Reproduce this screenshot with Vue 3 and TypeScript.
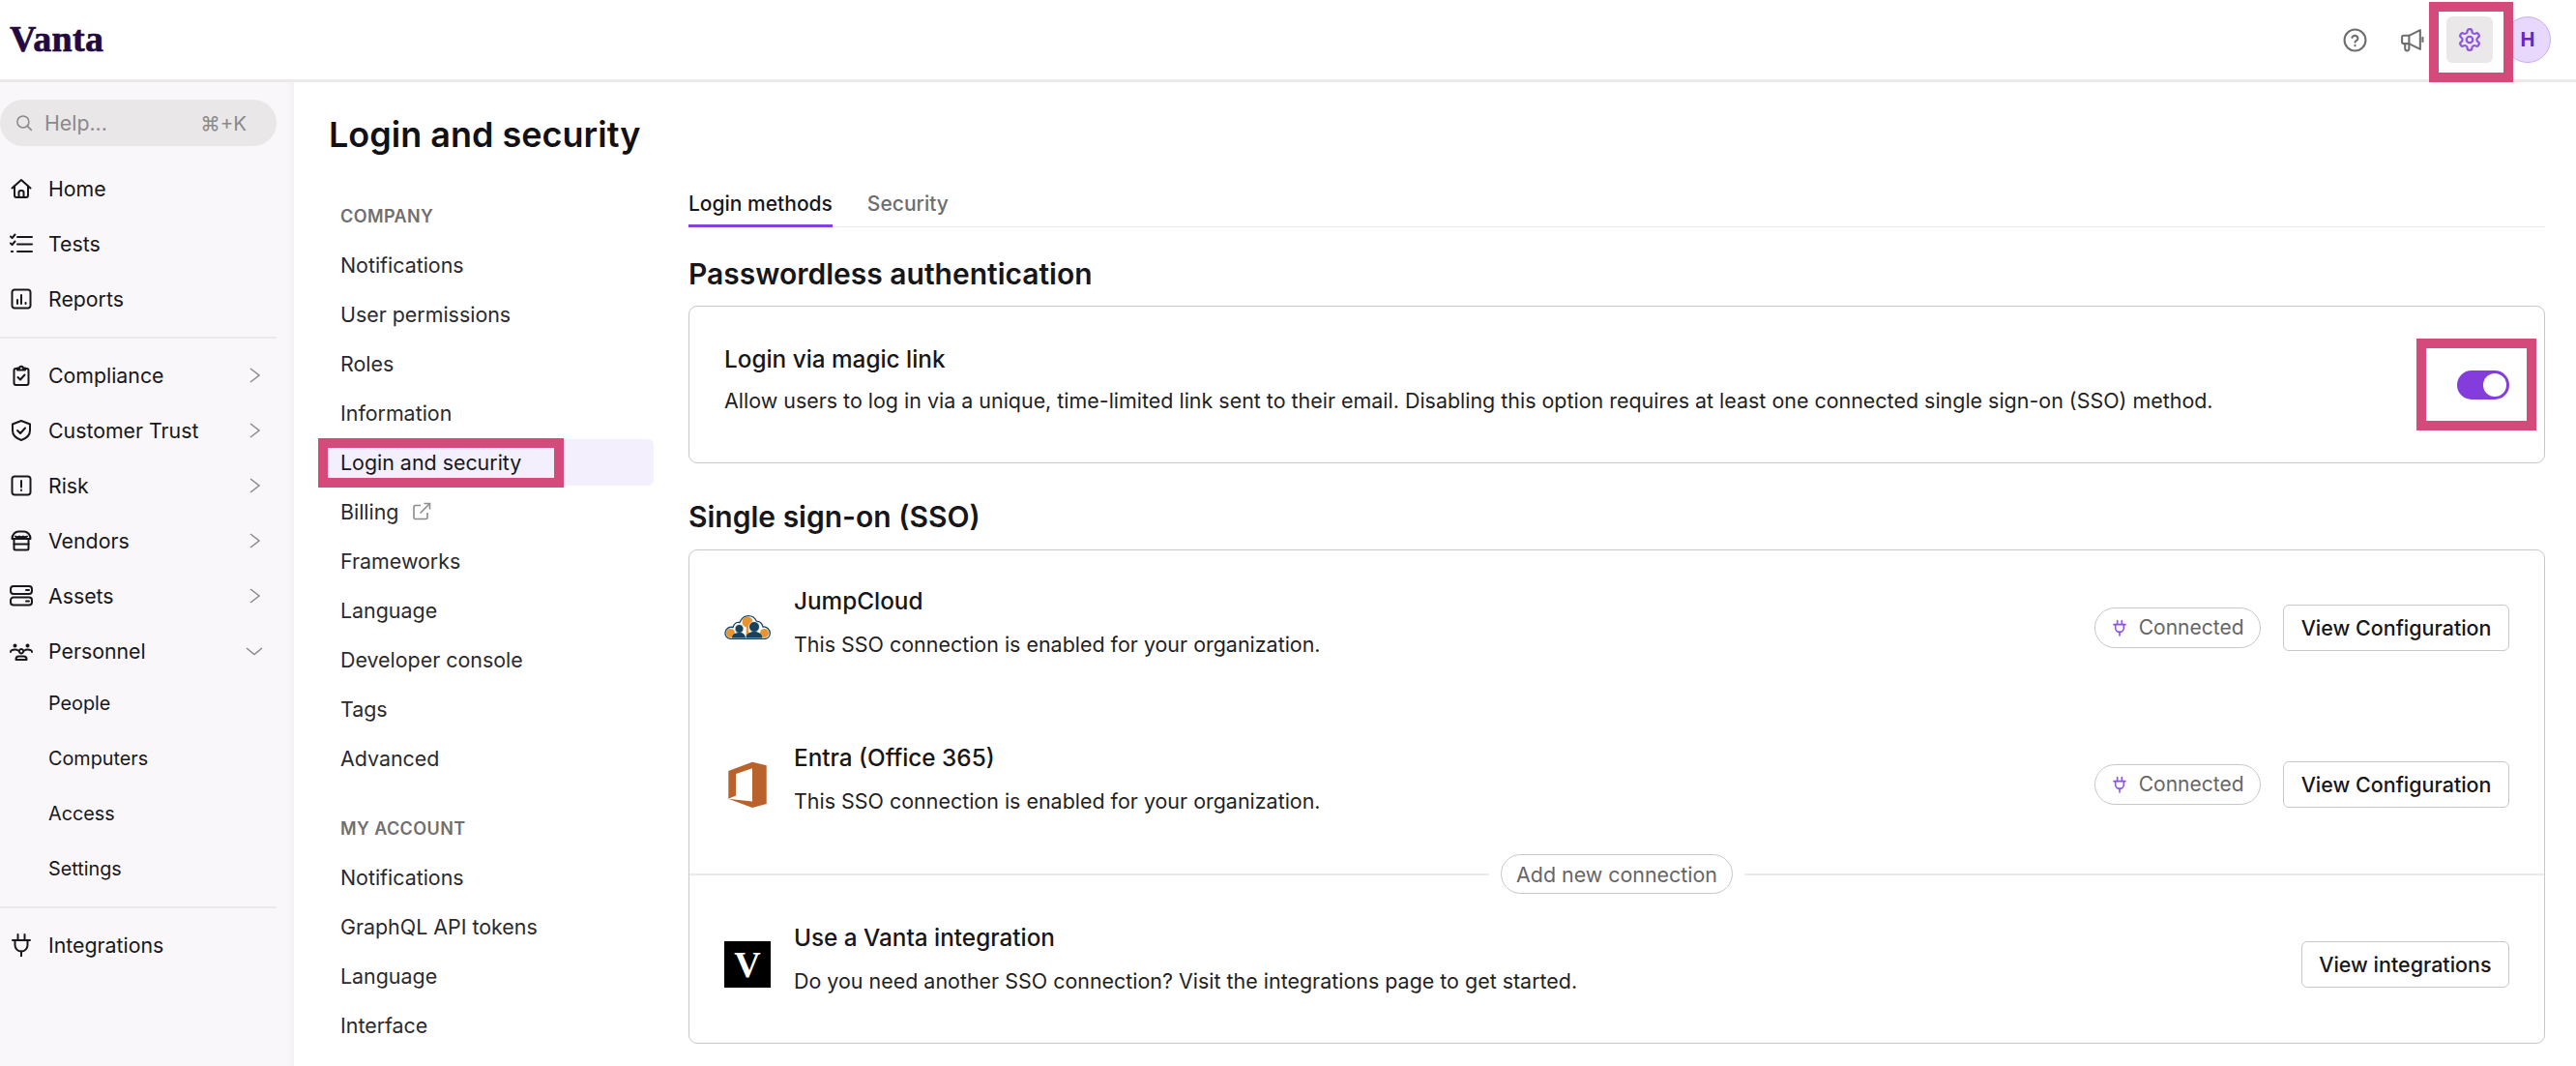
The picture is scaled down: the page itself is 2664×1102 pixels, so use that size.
<script setup lang="ts">
interface NavItem { label: string; icon: string[]; chevron?: 'right' | 'down' }

const homeIcon = ['M2.5 11.5 12 3l9.5 8.5', 'M5 9.5V19a2 2 0 0 0 2 2h10a2 2 0 0 0 2-2V9.5', 'M9.5 21v-5a2 2 0 0 1 2-2h1a2 2 0 0 1 2 2v5']
const testsIcon = ['M1 4.5l1.6 1.6L5.5 2.5', 'M1 11.5l1.6 1.6 2.9-3.6', 'M1.8 20h1.4', 'M8 5h15', 'M8 12.5h15', 'M8 20h15']
const reportsIcon = ['M5 2.5h14A2.5 2.5 0 0 1 21.500 5v14a2.500 2.500 0 0 1-2.500 2.500H5A2.500 2.500 0 0 1 2.500 19V5A2.500 2.500 0 0 1 5 2.500z', 'M8 17v-4', 'M12 17V8', 'M16.500 17v-1']
const complianceIcon = ['M8 5H6.500A2 2 0 0 0 4.500 7v13a2 2 0 0 0 2 2h11a2 2 0 0 0 2-2V7a2 2 0 0 0-2-2H16', 'M8 6.500V4.500h2.200a1.800 1.800 0 0 1 3.600 0H16v2z', 'M8.500 14l2.500 2.500 4.500-5']
const shieldIcon = ['M12 2 3 5.500V12c0 5 4 8.300 9 10 5-1.700 9-5 9-10V5.500z', 'M8 12l3 3 5-5.500']
const riskIcon = ['M5 2.500h14A2.500 2.500 0 0 1 21.500 5v14a2.500 2.500 0 0 1-2.500 2.500H5A2.500 2.500 0 0 1 2.500 19V5A2.500 2.500 0 0 1 5 2.500z', 'M12 7v6.500', 'M12 16.500v.6']
const vendorsIcon = ['M2.500 10C2.500 5.500 6 2.500 9 2.500h6c3 0 6.500 3 6.500 7.500z', 'M4.500 10.500V20a1.500 1.500 0 0 0 1.500 1.500h12a1.500 1.500 0 0 0 1.500-1.500v-9.500', 'M4.500 15.500h15', 'M6 7.500c1.500 1 2.500 1 4 0 1.500 1 2.500 1 4 0 1.500 1 2.500 1 4 0']
const assetsIcon = ['M4 2h16a3 3 0 0 1 3 3v2a3 3 0 0 1-3 3H4a3 3 0 0 1-3-3V5a3 3 0 0 1 3-3z', 'M4 13.500h16a3 3 0 0 1 3 3v2a3 3 0 0 1-3 3H4a3 3 0 0 1-3-3v-2a3 3 0 0 1 3-3z', 'M17 6h3', 'M17 17.500h3']
const personnelIcon = ['M5.500 5.500a1 1 0 1 0 .01 0z', 'M18.500 5.500a1 1 0 1 0 .01 0z', 'M1 13c0-2 1.500-2.500 4.500-2.500 1.500 0 2.500.3 3 1', 'M23 13c0-2-1.500-2.500-4.500-2.500-1.500 0-2.500.3-3 1', 'M12 10a2.200 2.200 0 1 0 .01 0z', 'M6.500 21v-.5c0-2 1.500-3 3-3h5c1.500 0 3 1 3 3v.5z']
const plugIcon = ['M8.500 1v5', 'M15.500 1v5', 'M3 7h18', 'M5.500 7v5a6.500 6.500 0 0 0 13 0V7', 'M12 18.500V24']

const primary: NavItem[] = [
  { label: 'Home', icon: homeIcon },
  { label: 'Tests', icon: testsIcon },
  { label: 'Reports', icon: reportsIcon },
]
const secondary: NavItem[] = [
  { label: 'Compliance', icon: complianceIcon, chevron: 'right' },
  { label: 'Customer Trust', icon: shieldIcon, chevron: 'right' },
  { label: 'Risk', icon: riskIcon, chevron: 'right' },
  { label: 'Vendors', icon: vendorsIcon, chevron: 'right' },
  { label: 'Assets', icon: assetsIcon, chevron: 'right' },
  { label: 'Personnel', icon: personnelIcon, chevron: 'down' },
]
const personnelLinks = ['People', 'Computers', 'Access', 'Settings']
const companyLinks = ['Notifications', 'User permissions', 'Roles', 'Information', 'Login and security', 'Billing', 'Frameworks', 'Language', 'Developer console', 'Tags', 'Advanced']
const accountLinks = ['Notifications', 'GraphQL API tokens', 'Language', 'Interface']
</script>

<template>
  <div class="app">
    <header class="topbar">
      <span class="logo">Vanta</span>
      <div class="top-actions">
        <span class="top-btn">
          <svg viewBox="0 0 24 24" class="top-icon"><circle cx="12" cy="12" r="10.500" /><path d="M9 9.500a3 3 0 0 1 5.800.8c0 2-2.800 2.400-2.800 3.700" /><path d="M12 17v.6" /></svg>
        </span>
        <span class="top-btn megaphone">
          <svg viewBox="0 0 24 24" class="top-icon"><path d="M9 7.500 20 2v19L9 15.500H3.500A1.500 1.500 0 0 1 2 14V9a1.500 1.500 0 0 1 1.500-1.500z" /><path d="M9 7.500v8" /><path d="M5 15.500v5a2 2 0 0 0 4 0v-4" /><path d="M22.500 9.500v4" /></svg>
        </span>
        <span class="top-btn gear">
          <svg viewBox="0 0 24 24" class="gear-icon"><path d="M12.220 2h-.44a2 2 0 0 0-2 2v.18a2 2 0 0 1-1 1.730l-.43.250a2 2 0 0 1-2 0l-.15-.08a2 2 0 0 0-2.730.730l-.22.380a2 2 0 0 0 .730 2.730l.15.100a2 2 0 0 1 1 1.720v.510a2 2 0 0 1-1 1.740l-.15.090a2 2 0 0 0-.730 2.730l.22.380a2 2 0 0 0 2.730.730l.15-.08a2 2 0 0 1 2 0l.43.250a2 2 0 0 1 1 1.730V20a2 2 0 0 0 2 2h.44a2 2 0 0 0 2-2v-.18a2 2 0 0 1 1-1.730l.43-.25a2 2 0 0 1 2 0l.15.08a2 2 0 0 0 2.730-.73l.22-.39a2 2 0 0 0-.73-2.730l-.15-.08a2 2 0 0 1-1-1.740v-.5a2 2 0 0 1 1-1.740l.15-.09a2 2 0 0 0 .73-2.730l-.22-.38a2 2 0 0 0-2.730-.73l-.15.08a2 2 0 0 1-2 0l-.43-.25a2 2 0 0 1-1-1.730V4a2 2 0 0 0-2-2z" /><circle cx="12" cy="12" r="3" /></svg>
        </span>
        <span class="avatar">H</span>
      </div>
    </header>

    <div class="body">
      <aside class="sidebar">
        <div class="search">
          <svg viewBox="0 0 24 24" class="search-icon"><circle cx="10.500" cy="10.500" r="8" /><path d="m16.500 16.500 6 6" /></svg>
          <span class="search-text">Help...</span>
          <span class="search-key">⌘+K</span>
        </div>
        <nav class="nav-group first">
          <a v-for="item in primary" :key="item.label" class="nav-row">
            <svg viewBox="0 0 24 24" class="nav-icon"><path v-for="d in item.icon" :key="d" :d="d" /></svg>
            <span>{{ item.label }}</span>
          </a>
        </nav>
        <div class="side-rule"></div>
        <nav class="nav-group">
          <a v-for="item in secondary" :key="item.label" class="nav-row">
            <svg viewBox="0 0 24 24" class="nav-icon"><path v-for="d in item.icon" :key="d" :d="d" /></svg>
            <span>{{ item.label }}</span>
            <svg v-if="item.chevron === 'right'" viewBox="0 0 24 24" class="chevron"><path d="m8 5 9 7-9 7" /></svg>
            <svg v-else viewBox="0 0 24 24" class="chevron"><path d="m4 9 8 6.500 8-6.500" /></svg>
          </a>
          <div class="sub-links">
            <a v-for="link in personnelLinks" :key="link" class="sub-row">{{ link }}</a>
          </div>
        </nav>
        <div class="side-rule"></div>
        <a class="nav-row">
          <svg viewBox="0 0 24 24" class="nav-icon"><path v-for="d in plugIcon" :key="d" :d="d" /></svg>
          <span>Integrations</span>
        </a>
      </aside>

      <main class="page">
        <h1 class="page-title">Login and security</h1>
        <div class="columns">
          <div class="subnav">
            <div class="subnav-label">COMPANY</div>
            <div class="subnav-list">
              <a v-for="link in companyLinks" :key="link" class="subnav-item" :class="{ active: link === 'Login and security' }">
                {{ link }}
                <svg v-if="link === 'Billing'" viewBox="0 0 20 20" class="external"><path d="M9 3.500H3.500A1.500 1.500 0 0 0 2 5v11a1.500 1.500 0 0 0 1.500 1.500h11A1.500 1.500 0 0 0 16 16v-5" /><path d="M8.500 11.500 18 2" /><path d="M12.500 1.500H18.500V7.500" /></svg>
              </a>
            </div>
            <div class="subnav-label second">MY ACCOUNT</div>
            <div class="subnav-list">
              <a v-for="link in accountLinks" :key="link" class="subnav-item">{{ link }}</a>
            </div>
          </div>

          <div class="content">
            <div class="tabs">
              <span class="tab selected">Login methods</span>
              <span class="tab">Security</span>
            </div>

            <h2 class="section-title first-title">Passwordless authentication</h2>
            <section class="card magic">
              <div class="row-text">
                <div class="row-title">Login via magic link</div>
                <div class="row-desc">Allow users to log in via a unique, time-limited link sent to their email. Disabling this option requires at least one connected single sign-on (SSO) method.</div>
              </div>
              <span class="toggle"><span class="knob"></span></span>
            </section>

            <h2 class="section-title sso-title">Single sign-on (SSO)</h2>
            <section class="card sso">
              <div class="sso-row">
                <svg viewBox="0 0 48 25" class="logo-jump">
                  <path d="M7 24.400C2.500 24.400.7 20.500 1 18c.5-4 4-6.500 8-5.500C10 8.500 13 6.800 16 7.500 18 3 21.500.7 25 .7c4 0 7 2.500 8.500 5.800 3.500-.5 6 2.500 6.500 5.500 4-.5 7.300 3 7.300 6.500 0 3.500-2.500 6-6 6z" fill="#fff" stroke="#17435c" stroke-width="1.300" />
                  <circle cx="6.500" cy="18.500" r="4.500" fill="#e8952f" />
                  <circle cx="41.500" cy="18.500" r="4.500" fill="#e8952f" />
                  <circle cx="24" cy="7" r="5.500" fill="#e8952f" />
                  <path d="M23 10h2l.7 13h-3.400z" fill="#e8952f" />
                  <circle cx="15.500" cy="14" r="4.500" fill="#17435c" stroke="#fff" stroke-width=".8" />
                  <path d="M8 23.500c0-3.500 3-5.500 7.500-5.500s6 2 6.500 5.500z" fill="#17435c" />
                  <circle cx="31" cy="12" r="5.500" fill="#17435c" stroke="#fff" stroke-width=".8" />
                  <path d="M22.500 23.500c0-4 3.500-6.500 8.500-6.500s8 2.500 8.500 6.500z" fill="#17435c" />
                </svg>
                <div class="row-text sso-text">
                  <div class="row-title">JumpCloud</div>
                  <div class="row-desc">This SSO connection is enabled for your organization.</div>
                </div>
                <span class="status">
                  <svg viewBox="0 0 24 24" class="status-plug"><path v-for="d in plugIcon" :key="d" :d="d" /></svg>
                  Connected
                </span>
                <button class="action">View Configuration</button>
              </div>

              <div class="sso-row">
                <svg viewBox="0 0 48 48" class="logo-box">
                  <path fill="#b9622b" d="M4.300 10 29 .7l14.700 3.600V44L29 48 4.300 38.700zM29 7.300 12 13v22.500l-7.700 3.200L29 41.500z" fill-rule="evenodd" />
                </svg>
                <div class="row-text sso-text">
                  <div class="row-title">Entra (Office 365)</div>
                  <div class="row-desc">This SSO connection is enabled for your organization.</div>
                </div>
                <span class="status">
                  <svg viewBox="0 0 24 24" class="status-plug"><path v-for="d in plugIcon" :key="d" :d="d" /></svg>
                  Connected
                </span>
                <button class="action">View Configuration</button>
              </div>

              <div class="divider">
                <span class="divider-line"></span>
                <span class="divider-pill">Add new connection</span>
                <span class="divider-line"></span>
              </div>

              <div class="sso-row last">
                <span class="vanta-box">V</span>
                <div class="row-text sso-text">
                  <div class="row-title">Use a Vanta integration</div>
                  <div class="row-desc">Do you need another SSO connection? Visit the integrations page to get started.</div>
                </div>
                <button class="action">View integrations</button>
              </div>
            </section>
          </div>
        </div>
      </main>
    </div>

    <span class="mark mark-gear"></span>
    <span class="mark mark-nav"></span>
    <span class="mark mark-toggle"></span>
  </div>
</template>

<style>
html, body { margin: 0; background: #fff; }
</style>

<style scoped>
.app {
  position: relative;
  width: 2664px;
  height: 1102px;
  overflow: hidden;
  background: #fff;
  font-family: Inter, "Noto Sans", sans-serif;
  color: #17171b;
}
.topbar {
  height: 82px;
  border-bottom: 3px solid #ebe9ea;
  display: flex;
  align-items: center;
  justify-content: space-between;
  padding: 0 26px 0 10px;
}
.logo {
  font-family: "Liberation Serif", serif;
  font-weight: 700;
  font-size: 38px;
  letter-spacing: .3px;
  color: #23093f;
  margin-top: -2px;
  -webkit-text-stroke: .6px #23093f;
}
.top-actions { display: flex; align-items: center; }
.top-btn {
  width: 48px;
  height: 48px;
  display: flex;
  align-items: center;
  justify-content: center;
  border-radius: 6px;
  margin-right: 11px;
}
.top-btn.megaphone { margin-right: 12px; }
.top-btn.gear { background: #eae8e9; margin-right: 12px; }
.top-icon { width: 25px; height: 25px; fill: none; stroke: #6e6e6e; stroke-width: 2; stroke-linecap: round; stroke-linejoin: round; }
.gear-icon { width: 26px; height: 26px; fill: none; stroke: #8d52e6; stroke-width: 2; stroke-linejoin: round; }
.avatar {
  box-sizing: border-box;
  width: 48px;
  height: 48px;
  border-radius: 50%;
  background: #e8d9fc;
  border: 1px solid #cda9f6;
  color: #6a24c9;
  font-weight: 700;
  font-size: 20px;
  display: flex;
  align-items: center;
  justify-content: center;
}
.body { display: flex; height: 1017px; }
.sidebar {
  box-sizing: border-box;
  width: 304px;
  flex: none;
  background: #f9f7f9;
  box-shadow: inset -8px 0 6px -6px rgba(0, 0, 0, 0.04);
  padding: 18px 18px 0 0;
}
.search {
  height: 48px;
  border-radius: 24px;
  background: #e9e7e8;
  display: flex;
  align-items: center;
  padding: 0 31px 0 16px;
  color: #8b898b;
  font-size: 21.300px;
}
.search-icon { width: 18px; height: 18px; fill: none; stroke: #8b898b; stroke-width: 2; margin-right: 12px; }
.search-text { flex: 1; }
.search-key { font-size: 20.500px; }
.nav-group.first { margin-top: 15px; }
.nav-row {
  height: 57px;
  display: flex;
  align-items: center;
  font-size: 21.300px;
  padding-left: 10px;
  color: #17171b;
}
.nav-icon {
  width: 24px;
  height: 24px;
  flex: none;
  margin-right: 16px;
  fill: none;
  stroke: #17171b;
  stroke-width: 2;
  stroke-linecap: round;
  stroke-linejoin: round;
}
.chevron {
  width: 24px;
  height: 24px;
  margin-left: auto;
  margin-right: 11px;
  fill: none;
  stroke: #8a8a8a;
  stroke-width: 1.500;
}
.side-rule { height: 2px; background: #ebe9ea; margin: 11px 0 9px; }
.sub-links { margin-top: -3px; }
.sub-row {
  height: 57px;
  display: flex;
  align-items: center;
  padding-left: 50px;
  font-size: 19.800px;
  color: #17171b;
}
.page { flex: 1; min-width: 0; padding: 30px 32px 0 28px; }
.page-title {
  margin: 0 0 27px 8px;
  font-size: 36px;
  line-height: 48px;
  font-weight: 600;
  color: #121216;
}
.columns { display: flex; }
.subnav { width: 344px; flex: none; margin-right: 36px; padding-top: 21.500px; }
.subnav-label {
  padding-left: 20px;
  font-size: 18px;
  font-weight: 600;
  line-height: 24px;
  color: #6f6f6f;
  margin-bottom: 14.500px;
  letter-spacing: .4px;
}
.subnav-label.second { margin-top: 37px; margin-bottom: 13.500px; }
.subnav-list { display: flex; flex-direction: column; gap: 3px; }
.subnav-item {
  height: 48px;
  display: flex;
  align-items: center;
  padding-left: 20px;
  border-radius: 6px;
  font-size: 21.400px;
  color: #2a2a2e;
}
.subnav-item.active { background: #f4effc; color: #17171b; }
.external { width: 20px; height: 20px; margin-left: 14px; fill: none; stroke: #8b8b8b; stroke-width: 1.600; }
.content { flex: 1; min-width: 0; }
.tabs { display: flex; height: 45px; border-bottom: 1px solid #e9e9e9; box-sizing: border-box; gap: 36px; }
.tab {
  height: 45px;
  box-sizing: border-box;
  padding-top: 8px;
  font-size: 21px;
  font-weight: 500;
  color: #6e6e6e;
}
.tab.selected { color: #17171b; border-bottom: 3px solid #8340dd; }
.section-title { margin: 0; font-size: 30px; line-height: 36px; font-weight: 600; color: #17171b; }
.first-title { margin: 30px 0 15px; }
.sso-title { margin: 37px 0 16px; }
.card { box-sizing: border-box; border: 1.500px solid #c8c8c8; border-radius: 9px; background: #fff; }
.magic {
  height: 163px;
  display: flex;
  align-items: center;
  justify-content: space-between;
  padding: 0 36px;
}
.row-text { margin-bottom: 11px; }
.row-title { font-size: 24.300px; line-height: 30px; font-weight: 500; color: #17171b; margin-bottom: 13px; }
.row-desc { font-size: 21.450px; line-height: 30px; color: #1f1f23; }
.toggle {
  box-sizing: border-box;
  width: 54px;
  height: 30px;
  border-radius: 15px;
  background: #843ddc;
  display: flex;
  align-items: center;
  justify-content: flex-end;
  padding-right: 3px;
}
.knob { width: 24px; height: 24px; border-radius: 50%; background: #fff; }
.sso { height: 511px; }
.sso-row {
  height: 162px;
  display: flex;
  align-items: center;
  padding: 0 36px;
}
.sso-row:first-child { margin-top: -1.500px; }
.sso-row.last { height: 145px; }
.logo-jump { width: 48px; height: 25px; flex: none; margin-right: 24px; }
.logo-box { width: 48px; height: 48px; flex: none; margin-right: 24px; }
.sso-text { flex: 1; margin-bottom: 11px; }
.sso-text .row-title { margin-bottom: 15px; }
.status {
  box-sizing: border-box;
  height: 42px;
  width: 172px;
  border: 1.500px solid #c8c8c8;
  border-radius: 21px;
  display: flex;
  align-items: center;
  justify-content: center;
  gap: 12px;
  font-size: 21px;
  color: #666;
  margin-right: 23px;
}
.status-plug { width: 16px; height: 20px; fill: none; stroke: #8d52e6; stroke-width: 2.400; stroke-linecap: round; }
.action {
  box-sizing: border-box;
  height: 48px;
  padding: 0 17.500px;
  background: #fff;
  border: 1.500px solid #c8c8c8;
  border-radius: 6px;
  font-family: inherit;
  font-size: 21.470px;
  font-weight: 500;
  color: #17171b;
}
.divider { display: flex; align-items: center; gap: 12px; height: 41px; margin-top: -8.500px; }
.divider-line { flex: 1; height: 2px; background: #ebe9ea; }
.divider-pill {
  box-sizing: border-box;
  width: 240px;
  height: 41px;
  border: 1.500px solid #c8c8c8;
  border-radius: 21px;
  display: flex;
  align-items: center;
  justify-content: center;
  font-size: 21.400px;
  color: #666;
}
.vanta-box {
  width: 48px;
  height: 48px;
  flex: none;
  margin-right: 24px;
  background: #000;
  color: #fff;
  font-family: "Liberation Serif", serif;
  font-weight: 700;
  font-size: 38px;
  display: flex;
  align-items: center;
  justify-content: center;
}
.mark { position: absolute; box-sizing: border-box; border: 10px solid #d44a7a; pointer-events: none; }
.mark-gear { left: 2512px; top: 2px; width: 87px; height: 83px; }
.mark-nav { left: 329px; top: 453px; width: 254px; height: 51px; }
.mark-toggle { left: 2499px; top: 350px; width: 124px; height: 95px; }
</style>
